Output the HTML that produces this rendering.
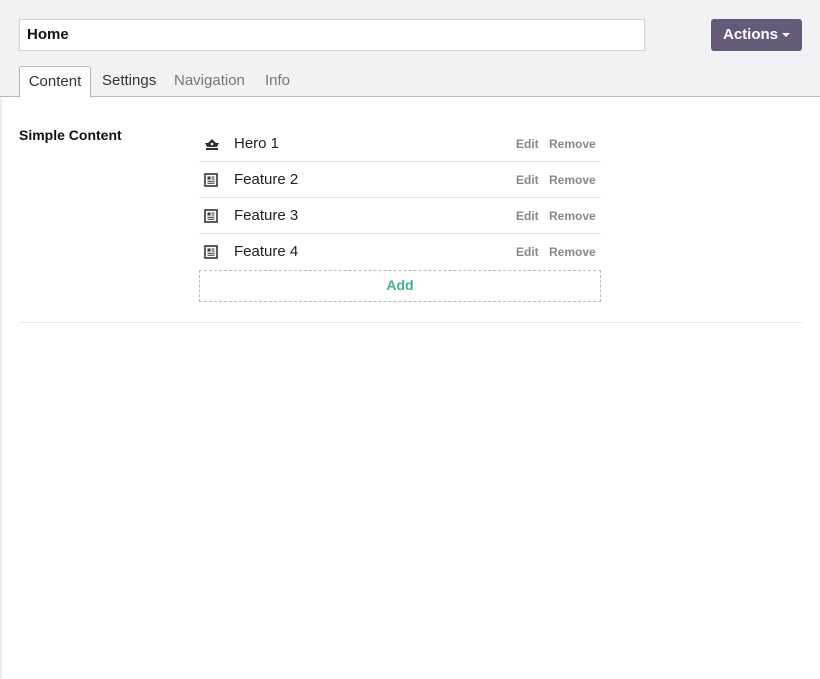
<!DOCTYPE html>
<html><head><style>
body{margin:0;width:820px;height:679px;background:#fff;font-family:"Liberation Sans",sans-serif;position:relative;overflow:hidden}
.hdr{position:absolute;left:0;top:0;width:820px;height:96px;background:#f2f2f4;border-bottom:1px solid #b8b5c2;z-index:1}
.lb{position:absolute;left:0;top:97px;width:3px;height:582px;background:linear-gradient(90deg,#ececef,#fcfcfc)}
.inp{position:absolute;left:19px;top:19px;background:#fff;border:1px solid #d3d2d8;font-weight:bold;font-size:15px;line-height:30px;padding-left:7px;box-sizing:border-box;width:626px;height:32px;color:#111;z-index:2}
.btn{position:absolute;left:711px;top:19px;width:91px;height:32px;background:#655a78;border-radius:3px;color:#fff;font-weight:bold;font-size:15px;line-height:31px;text-align:center;z-index:2}
.car{display:inline-block;border-left:4px solid transparent;border-right:4px solid transparent;border-top:4px solid #fff;vertical-align:middle;margin-left:4px}
.tab{position:absolute;top:66px;height:31px;line-height:29px;font-size:15px;color:#777;z-index:2}
.tab.a{background:#fff;border:1px solid #b8b5c2;border-bottom:none;color:#333;border-radius:3px 3px 0 0;box-sizing:border-box;z-index:3;height:32px;line-height:30px}
.lbl{position:absolute;left:19px;top:127px;font-weight:bold;font-size:14px;color:#111}
.row{position:absolute;left:199px;width:402px;height:36px;border-bottom:1px solid #e4e4e4;box-sizing:border-box;font-size:15px;color:#222}
.row .t{position:absolute;left:35px;top:9px}
.row .e{position:absolute;left:317px;top:11px;font-size:12px;font-weight:bold;color:#888}
.row .r{position:absolute;left:350px;top:11px;font-size:12px;font-weight:bold;color:#888}
.row svg{position:absolute;left:5px;top:11px}
.add{position:absolute;left:199px;top:270px;width:402px;height:32px;border:1px dashed #bbb;box-sizing:border-box;text-align:center;line-height:29px;color:#3bb0a0;font-weight:bold;font-size:14px}
.hr{position:absolute;left:19px;top:322px;width:783px;height:1px;background:#eaeaea}
</style></head><body>
<div class="hdr"></div><div class="lb"></div>
<div class="inp">Home</div>
<div class="btn">Actions<span class="car"></span></div>
<div class="tab a" style="left:19px;width:72px;text-align:center">Content</div>
<div class="tab" style="left:102px;color:#333">Settings</div>
<div class="tab" style="left:174px">Navigation</div>
<div class="tab" style="left:265px">Info</div>
<div class="lbl">Simple Content</div>
<div class="row" style="top:126px"><svg width="16" height="14" viewBox="0 0 16 14"><path d="M1 6h14l-2 4H3z M4 6l4-4 4 4z M2 11h12v2H2z" fill="#333"/><circle cx="8" cy="7" r="1.3" fill="#fff"/></svg><span class="t">Hero 1</span><span class="e">Edit</span><span class="r">Remove</span></div>
<div class="row" style="top:162px"><svg width="14" height="14" viewBox="0 0 14 14"><rect x="1" y="1" width="12" height="12" fill="none" stroke="#333" stroke-width="1.6"/><rect x="3.5" y="3.5" width="3" height="3" fill="#333"/><path d="M7.5 4h3M7.5 6h3M3.5 8.3h7M3.5 10.3h7" stroke="#333"/></svg><span class="t">Feature 2</span><span class="e">Edit</span><span class="r">Remove</span></div>
<div class="row" style="top:198px"><svg width="14" height="14" viewBox="0 0 14 14"><rect x="1" y="1" width="12" height="12" fill="none" stroke="#333" stroke-width="1.6"/><rect x="3.5" y="3.5" width="3" height="3" fill="#333"/><path d="M7.5 4h3M7.5 6h3M3.5 8.3h7M3.5 10.3h7" stroke="#333"/></svg><span class="t">Feature 3</span><span class="e">Edit</span><span class="r">Remove</span></div>
<div class="row" style="top:234px;border-bottom:none"><svg width="14" height="14" viewBox="0 0 14 14"><rect x="1" y="1" width="12" height="12" fill="none" stroke="#333" stroke-width="1.6"/><rect x="3.5" y="3.5" width="3" height="3" fill="#333"/><path d="M7.5 4h3M7.5 6h3M3.5 8.3h7M3.5 10.3h7" stroke="#333"/></svg><span class="t">Feature 4</span><span class="e">Edit</span><span class="r">Remove</span></div>
<div class="add">Add</div>
<div class="hr"></div>
</body></html>
